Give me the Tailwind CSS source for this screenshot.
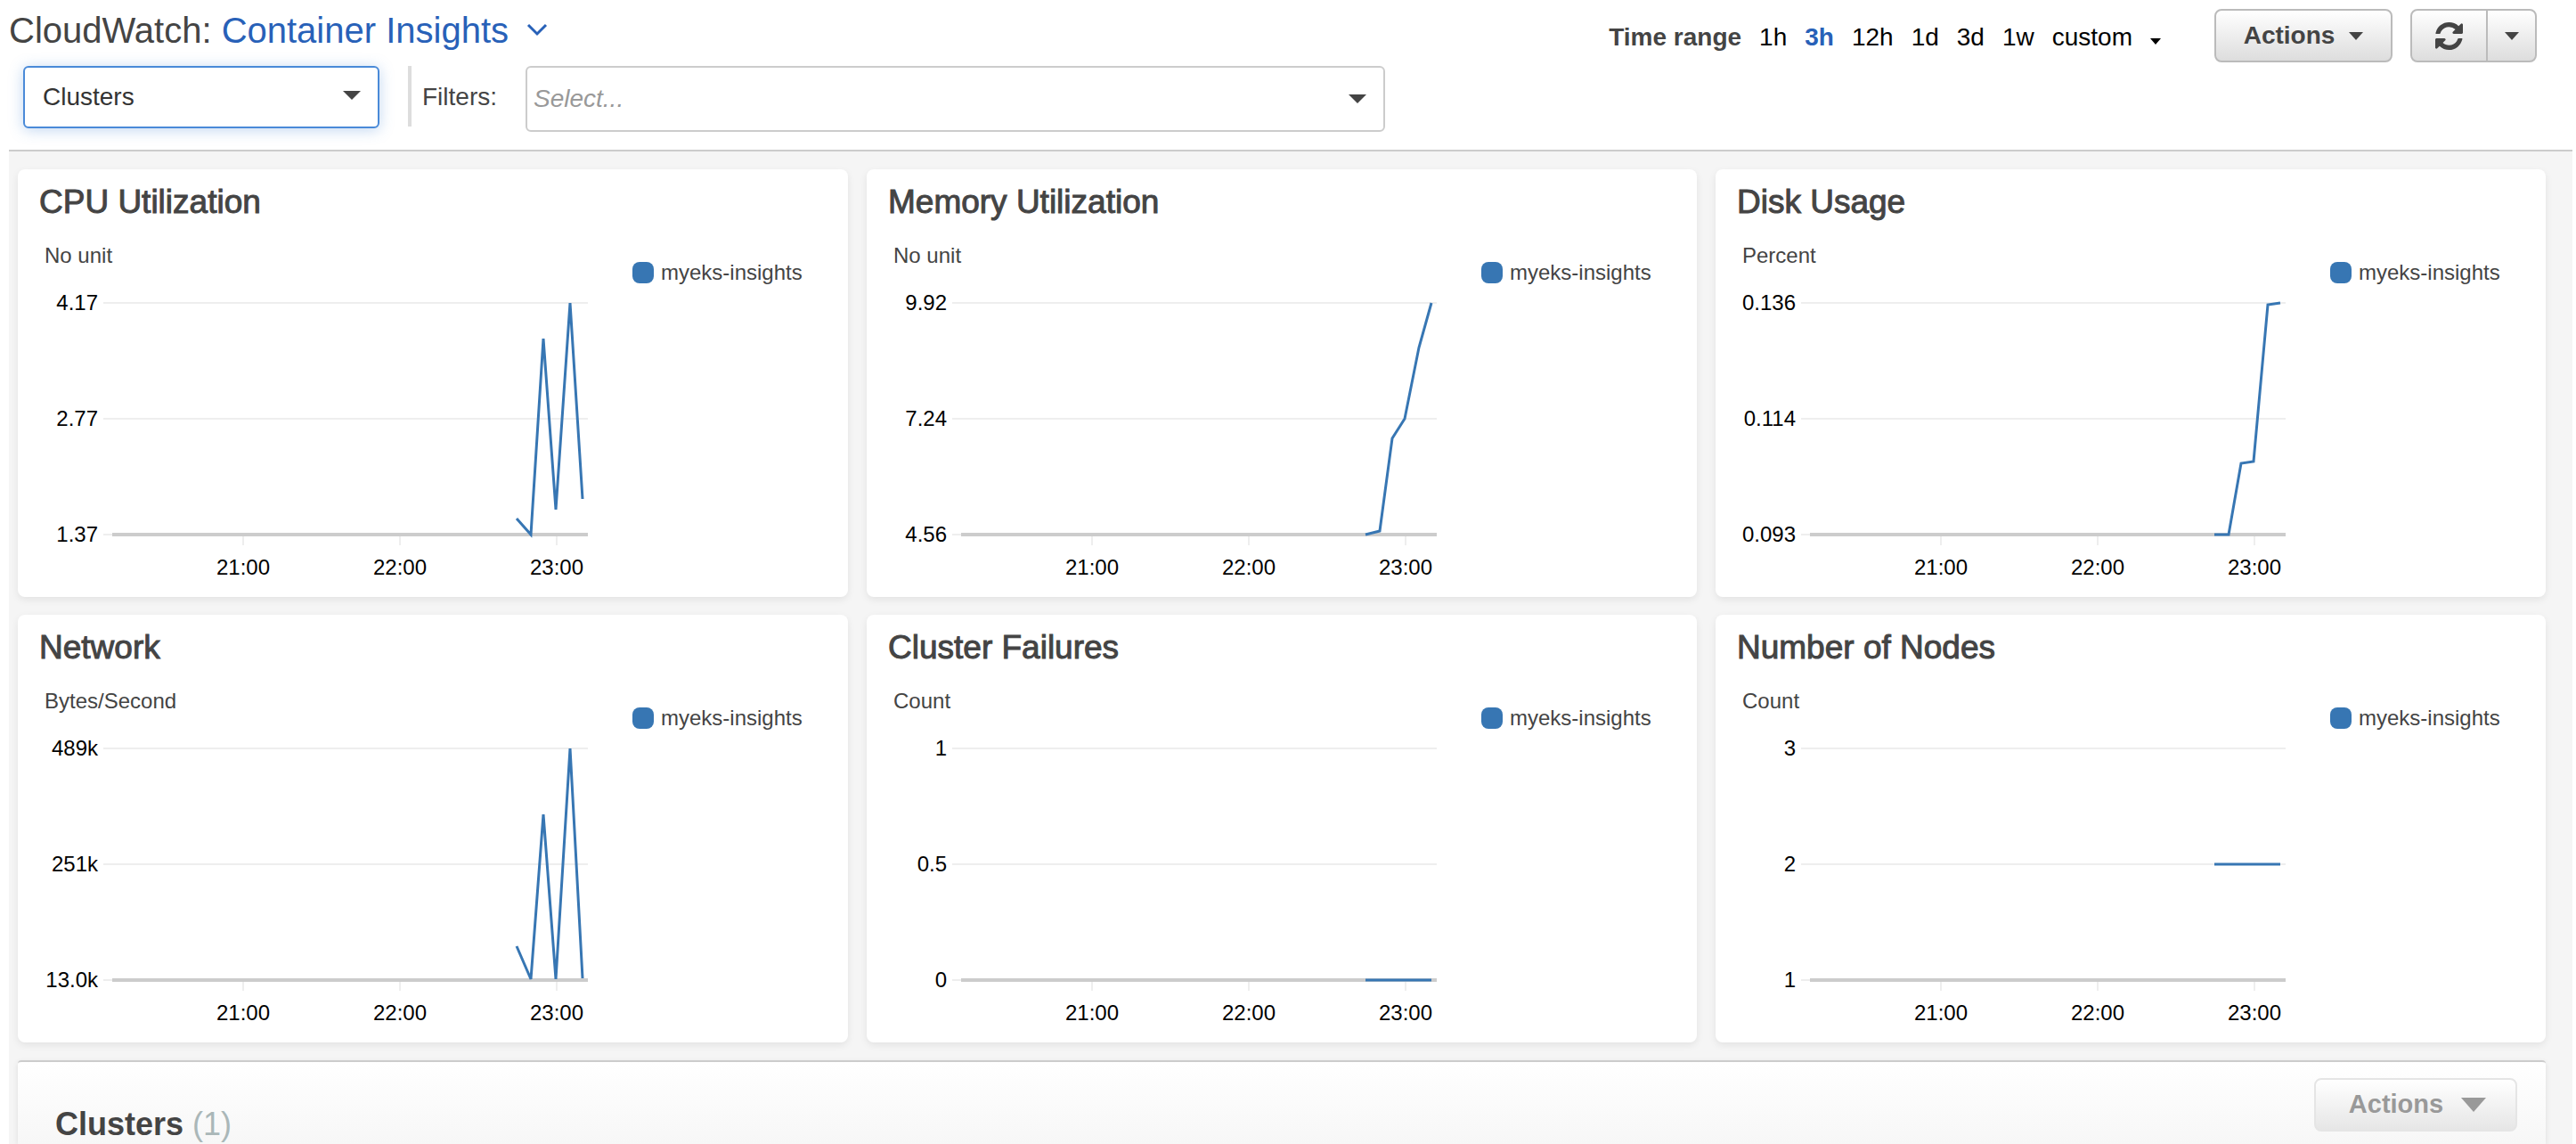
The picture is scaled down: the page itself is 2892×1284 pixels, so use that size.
<!DOCTYPE html>
<html lang="en">
<head>
<meta charset="utf-8">
<title>CloudWatch: Container Insights</title>
<script src="https://cdn.jsdelivr.net/npm/@tailwindcss/browser@4"></script>
</head>
<body class="min-h-screen flex flex-col bg-white pl-[10px] pr-1 font-['Liberation_Sans',Arial,sans-serif] text-[28px] text-[#444]">

<header class="flex items-start justify-between border-b-2 border-[#ccc] pt-[10px] pb-5">
  <div class="flex flex-col gap-4">
    <h1 class="flex items-center text-[40px] leading-12">
      <span class="whitespace-pre">CloudWatch: </span>
      <a href="#" class="flex items-center gap-5 text-[#2861b8]">Container Insights
        <svg class="w-6 h-4" viewBox="0 0 24 16" fill="none" stroke="currentColor" stroke-width="3" aria-hidden="true"><path d="M2 2l10 10L22 2"/></svg>
      </a>
    </h1>
    <div class="flex items-start">
      <div class="relative ml-4">
        <select aria-label="Resource type" class="block appearance-none w-[400px] h-[70px] rounded-md border-2 border-[#4a8ad8] bg-white pl-5 text-[#333] shadow-[0_2px_16px_rgba(74,138,216,0.35)]">
          <option>Clusters</option>
        </select>
        <svg class="absolute right-[21px] top-[28px] w-5 h-[10px] pointer-events-none" viewBox="0 0 20 10" fill="#444" aria-hidden="true"><path d="M0 0h20L10 10z"/></svg>
      </div>
      <div class="ml-8 w-1 h-[68px] bg-[#ddd]"></div>
      <label for="filters" class="ml-3 leading-[70px]">Filters:</label>
      <div class="relative ml-8">
        <input id="filters" type="text" placeholder="Select..." class="block w-[965px] h-[74px] rounded-md border-2 border-[#ccc] pl-[7px] italic placeholder:text-[#999]">
        <svg class="absolute right-[21px] top-[32px] w-5 h-[10px] pointer-events-none" viewBox="0 0 20 10" fill="#444" aria-hidden="true"><path d="M0 0h20L10 10z"/></svg>
      </div>
    </div>
  </div>

  <div class="flex items-center mr-10 h-[60px]">
    <div class="flex items-center gap-5 pt-1 mr-[60px] text-black" role="group" aria-label="Time range">
      <span class="font-bold text-[#444]">Time range</span>
      <button>1h</button>
      <button class="font-bold text-[#2861b8]">3h</button>
      <button>12h</button>
      <button>1d</button>
      <button>3d</button>
      <button>1w</button>
      <button class="flex items-center gap-5">custom
        <svg class="w-3 h-[7px] mt-2" viewBox="0 0 12 7" aria-hidden="true"><path d="M0 0h12L6 7z"/></svg>
      </button>
    </div>
    <button class="flex items-center justify-center gap-4 w-[200px] h-[60px] mr-5 rounded-lg border-2 border-[#bbb] bg-linear-to-b from-white to-[#ddd] font-bold">Actions
      <svg class="w-4 h-[9px]" viewBox="0 0 16 9" fill="currentColor" aria-hidden="true"><path d="M0 0h16L8 9z"/></svg>
    </button>
    <div class="flex h-[60px] rounded-lg border-2 border-[#bbb] bg-linear-to-b from-white to-[#ddd]">
      <button aria-label="Refresh" class="flex items-center justify-center w-[85px] border-r-2 border-[#bbb]">
        <svg class="w-[31px] h-[31px]" viewBox="0 0 1536 1536" fill="currentColor" aria-hidden="true"><path d="M1511 928q0 5-1 7-64 268-268 434.5t-478 166.5q-146 0-282.5-55t-243.5-157l-129 129q-19 19-45 19t-45-19-19-45v-448q0-26 19-45t45-19h448q26 0 45 19t19 45-19 45l-137 137q71 66 161 102t187 36q134 0 250-65t186-179q11-17 53-117 8-23 30-23h192q13 0 22.5 9.5t9.5 22.5zm25-800v448q0 26-19 45t-45 19h-448q-26 0-45-19t-19-45 19-45l138-138q-148-137-349-137-134 0-250 65t-186 179q-11 17-53 117-8 23-30 23h-199q-13 0-22.5-9.5t-9.5-22.5v-7q65-268 270-434.5t480-166.5q146 0 284 55.5t245 156.5l130-129q19-19 45-19t45 19 19 45z"/></svg>
      </button>
      <button aria-label="Refresh options" class="flex items-center justify-center w-[53px]">
        <svg class="w-4 h-[9px]" viewBox="0 0 16 9" fill="currentColor" aria-hidden="true"><path d="M0 0h16L8 9z"/></svg>
      </button>
    </div>
  </div>
</header>

<main class="flex-1 flex flex-col gap-5 bg-[#f5f5f5] pt-5 pl-[10px] pr-[30px]">
  <div id="cards" class="grid grid-cols-3 gap-x-[21px] gap-y-5"></div>

  <section class="flex-1 flex items-start justify-between border-t-2 border-[#ccc] rounded-t bg-linear-to-b from-white to-[#f7f7f7] pt-[18px] pl-[42px] pr-8 shadow-[0_2px_6px_rgba(0,0,0,0.1)]">
    <h2 class="mt-8 text-[36px] leading-10 font-bold">Clusters <span class="font-normal text-[#aab7b8]">(1)</span></h2>
    <button disabled class="flex items-center justify-center gap-5 w-[228px] h-[60px] rounded-lg border-2 border-[#e5e5e5] bg-linear-to-b from-white to-[#e6e6e6] pl-1 font-bold text-[29px] text-[#999]">Actions
      <svg class="w-7 h-4" viewBox="0 0 28 16" fill="currentColor" aria-hidden="true"><path d="M0 0h28L14 16z"/></svg>
    </button>
  </section>
</main>

<script>
  // Sample x positions on a 544-unit wide plot; y is 14 at the top grid line and 274 at the axis.
  const xs = [464, 480, 494, 508, 524, 538];
  const charts = [
    { title: 'CPU Utilization', unit: 'No unit', ticks: ['4.17', '2.77', '1.37'], ys: [256, 274, 54, 246, 14, 234] },
    { title: 'Memory Utilization', unit: 'No unit', ticks: ['9.92', '7.24', '4.56'], ys: [274, 270, 166, 144, 64, 14] },
    { title: 'Disk Usage', unit: 'Percent', ticks: ['0.136', '0.114', '0.093'], ys: [274, 274, 194, 192, 16, 14] },
    { title: 'Network', unit: 'Bytes/Second', ticks: ['489k', '251k', '13.0k'], ys: [236, 273, 88, 273, 14, 272] },
    { title: 'Cluster Failures', unit: 'Count', ticks: ['1', '0.5', '0'], ys: [274, 274, 274, 274, 274, 274] },
    { title: 'Number of Nodes', unit: 'Count', ticks: ['3', '2', '1'], ys: [144, 144, 144, 144, 144, 144] },
  ];
  const hours = [['21:00', 157], ['22:00', 333], ['23:00', 509]];
  const pct = x => (x / 544 * 100).toFixed(2) + '%';

  document.getElementById('cards').innerHTML = charts.map(c => `
    <section class="rounded-lg bg-white pt-4 pb-[19px] shadow-[0_3px_8px_rgba(0,0,0,0.08)]">
      <h2 class="pl-6 text-[37px] leading-[42px] [-webkit-text-stroke:1px_#444]">${c.title}</h2>
      <div class="flex items-start text-2xl leading-7">
        <div class="flex-1 min-w-0 pt-[25px]">
          <div class="pl-[30px]">${c.unit}</div>
          <div class="flex items-start gap-[6px] mt-[25px] text-black">
            <div class="flex flex-col justify-between w-[90px] h-[288px] text-right">
              ${c.ticks.map(t => `<span>${t}</span>`).join('')}
            </div>
            <svg class="flex-1 min-w-0 h-[325px] overflow-visible" role="img" aria-label="${c.title}">
              <g stroke="#eee" stroke-width="2">
                <line x1="0" x2="100%" y1="14" y2="14"/>
                <line x1="0" x2="100%" y1="144" y2="144"/>
                <line x1="0" x2="12" y1="274" y2="274"/>
                ${hours.map(h => `<line x1="${pct(h[1])}" x2="${pct(h[1])}" y1="276" y2="286"/>`).join('')}
              </g>
              <line x1="10" x2="100%" y1="274" y2="274" stroke="#ccc" stroke-width="4"/>
              <svg width="100%" height="288" viewBox="0 0 544 288" preserveAspectRatio="none">
                <polyline fill="none" stroke="#3776b3" stroke-width="3" vector-effect="non-scaling-stroke" points="${xs.map((x, i) => x + ',' + c.ys[i]).join(' ')}"/>
              </svg>
              ${hours.map(h => `<text x="${pct(h[1])}" y="319" text-anchor="middle">${h[0]}</text>`).join('')}
            </svg>
          </div>
        </div>
        <div class="flex items-center gap-2 w-[292px] shrink-0 pt-[44px] pl-[50px]">
          <span class="w-6 h-6 rounded-lg bg-[#3776b3]"></span>
          <span>myeks-insights</span>
        </div>
      </div>
    </section>`).join('');
</script>
</body>
</html>
